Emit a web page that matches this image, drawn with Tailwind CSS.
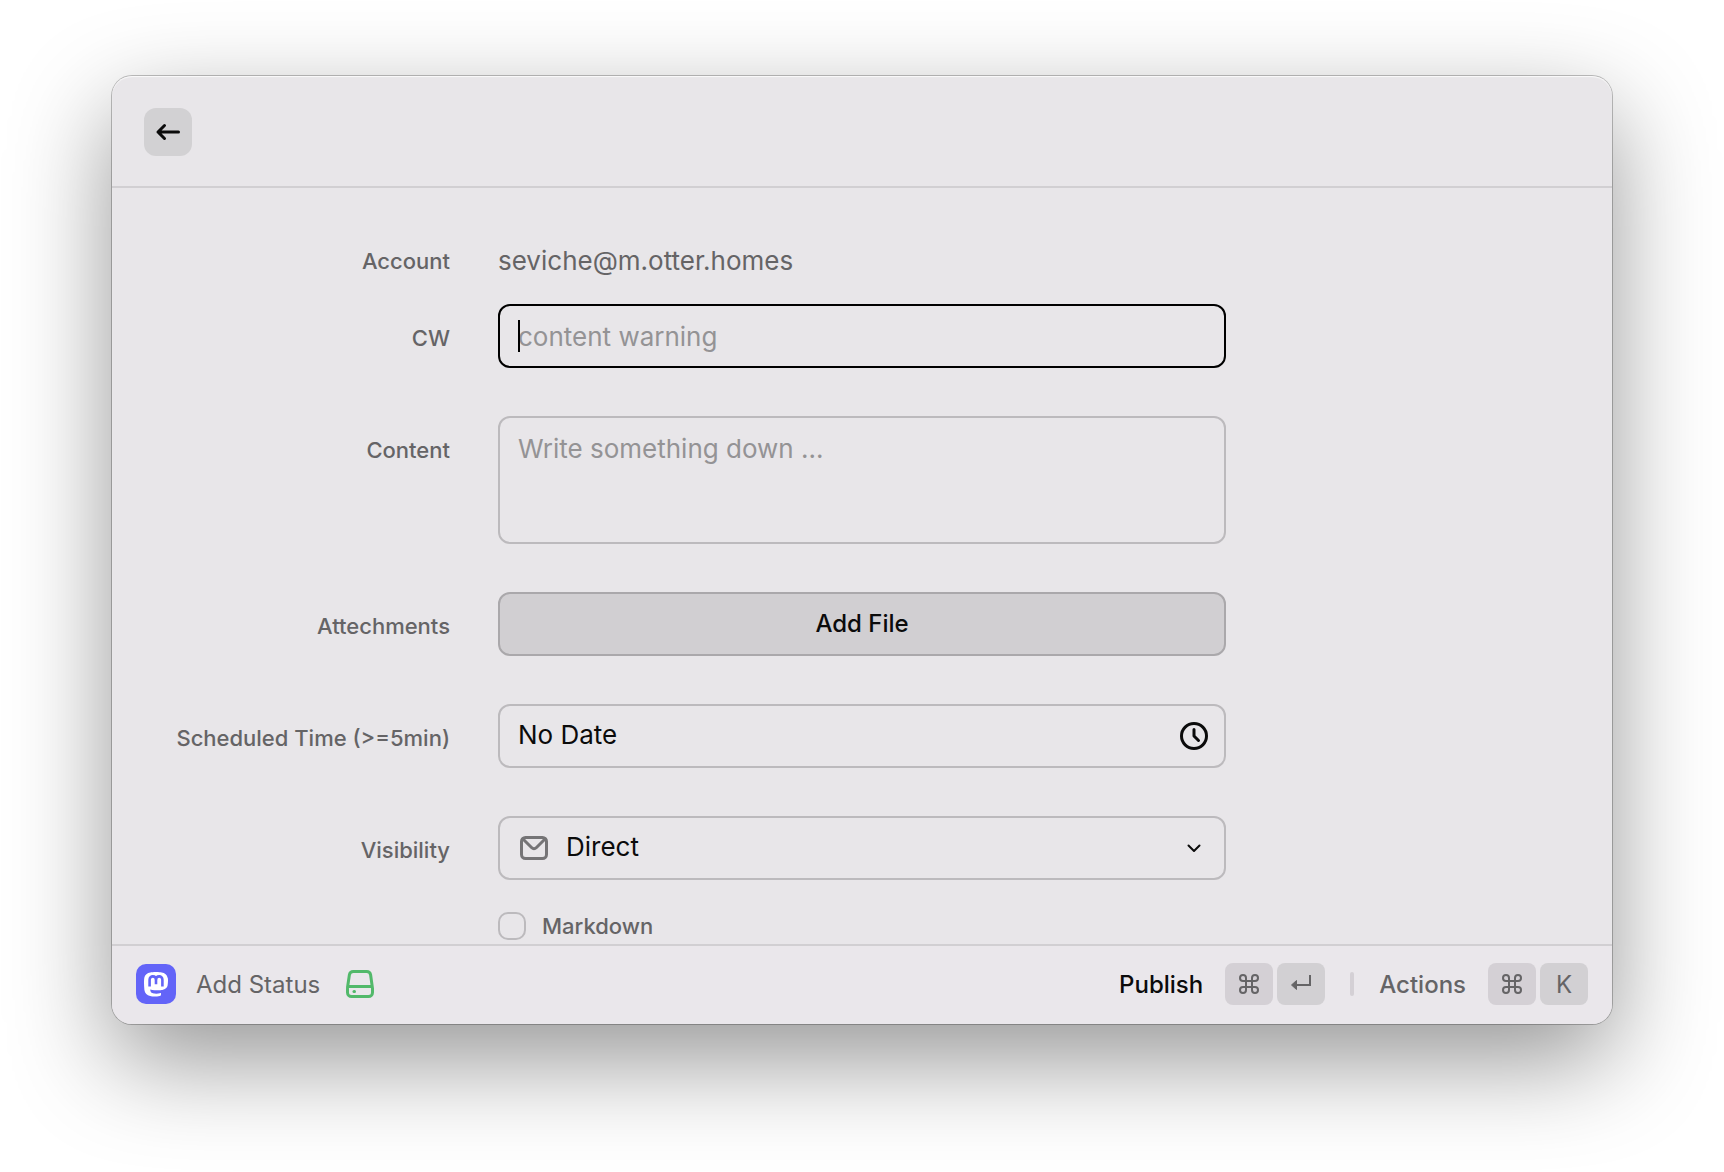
<!DOCTYPE html>
<html lang="en">
<head>
<meta charset="utf-8">
<meta name="viewport" content="width=device-width, initial-scale=1">
<title>Add Status</title>
<script src="https://cdn.jsdelivr.net/npm/@tailwindcss/browser@4"></script>
</head>
<body class="min-h-screen bg-white px-28 pt-19 pb-37 font-['Inter',sans-serif] text-[26px] leading-8 text-[#0b0b0b]">
<main class="flex flex-col overflow-hidden rounded-[20px] bg-[#e8e6e9] shadow-[inset_0_1px_1px_rgb(255_255_255/0.8),0_0_0_1px_rgb(0_0_0/0.24),0_36px_100px_rgb(0_0_0/0.42)]">
  <header class="flex h-28 items-center border-b-2 border-[#d1cfd2] px-8 pt-0.5">
    <button type="button" aria-label="Back" class="grid size-12 place-items-center rounded-xl bg-[#d2d1d3]">
      <svg class="size-8" viewBox="0 0 32 32" fill="none" stroke="currentColor" stroke-width="3" stroke-linecap="round" stroke-linejoin="round"><path d="M26.500 16H6M12.500 9.500 6 16l6.500 6.500"/></svg>
    </button>
  </header>

  <form id="status" class="flex flex-col gap-12 pt-[57px]">
    <div class="flex flex-col gap-[27px]">
      <div class="grid grid-cols-[minmax(0,1fr)_minmax(0,728px)_minmax(0,1fr)]">
        <span class="pr-12 text-right text-[22px] font-medium text-[#656466]">Account</span>
        <span class="text-[#656466]">seviche@m.otter.homes</span>
      </div>
      <div class="grid grid-cols-[minmax(0,1fr)_minmax(0,728px)_minmax(0,1fr)]">
        <label for="cw" class="pt-[18px] pr-12 text-right text-[22px] font-medium text-[#656466]">CW</label>
        <div class="relative">
          <input id="cw" type="text" placeholder="content warning" class="h-16 w-full rounded-xl border-2 border-black bg-transparent px-[18px] outline-none placeholder:text-[#949395]">
          <span class="absolute top-4 left-5 h-8 w-0.5 bg-black"></span>
        </div>
      </div>
    </div>

    <div class="grid grid-cols-[minmax(0,1fr)_minmax(0,728px)_minmax(0,1fr)]">
      <label for="content" class="pt-[18px] pr-12 text-right text-[22px] font-medium text-[#656466]">Content</label>
      <textarea id="content" placeholder="Write something down ..." class="h-32 w-full resize-none rounded-xl border-2 border-[#bcbabd] bg-transparent px-[18px] py-[15px] outline-none placeholder:text-[#949395]"></textarea>
    </div>

    <div class="grid grid-cols-[minmax(0,1fr)_minmax(0,728px)_minmax(0,1fr)]">
      <label for="file" class="pt-[18px] pr-12 text-right text-[22px] font-medium text-[#656466]">Attechments</label>
      <button id="file" type="button" class="h-16 rounded-xl border-2 border-[#aaa8ab] bg-[#d1cfd2] text-2xl font-medium">Add File</button>
    </div>

    <div class="grid grid-cols-[minmax(0,1fr)_minmax(0,728px)_minmax(0,1fr)]">
      <label for="time" class="pt-[18px] pr-12 text-right text-[22px] font-medium text-[#656466]">Scheduled Time (&gt;=5min)</label>
      <div class="relative">
        <input id="time" type="text" value="No Date" class="h-16 w-full rounded-xl border-2 border-[#bcbabd] bg-transparent pr-14 pb-1 pl-[18px] outline-none">
        <svg class="pointer-events-none absolute top-4 right-4 size-8" viewBox="0 0 32 32" fill="none" stroke="currentColor" stroke-width="3" stroke-linecap="round" stroke-linejoin="round"><circle cx="16" cy="16" r="12.500"/><path d="M16 9.500V16l4.500 4.500"/></svg>
      </div>
    </div>

    <div class="flex flex-col gap-7">
      <div class="grid grid-cols-[minmax(0,1fr)_minmax(0,728px)_minmax(0,1fr)]">
        <label for="visibility" class="pt-[18px] pr-12 text-right text-[22px] font-medium text-[#656466]">Visibility</label>
        <div class="relative">
          <select id="visibility" class="h-16 w-full appearance-none rounded-xl border-2 border-[#bcbabd] bg-transparent pr-14 pb-0.5 pl-[66px] outline-none"><option>Direct</option></select>
          <svg class="pointer-events-none absolute top-4 left-5 size-8 text-[#757476]" viewBox="0 0 32 32" fill="none" stroke="currentColor" stroke-width="3" stroke-linecap="round" stroke-linejoin="round"><rect x="3.500" y="5.500" width="25" height="21" rx="4"/><path d="m5 7 8.500 8.500q2.500 2.500 5 0L27 7"/></svg>
          <svg class="pointer-events-none absolute top-4 right-4 size-8" viewBox="0 0 32 32" fill="none" stroke="currentColor" stroke-width="2" stroke-linecap="round" stroke-linejoin="round"><path d="m10.500 13.500 5.500 5.500 5.500-5.500"/></svg>
        </div>
      </div>
      <div class="grid grid-cols-[minmax(0,1fr)_minmax(0,728px)_minmax(0,1fr)]">
        <div class="col-start-2 flex h-9 items-center gap-4">
          <input id="markdown" type="checkbox" class="size-7 appearance-none rounded-[10px] border-2 border-[#bcbabd]">
          <label for="markdown" class="text-[22px] font-medium text-[#656466]">Markdown</label>
        </div>
      </div>
    </div>
  </form>

  <footer class="flex h-20 items-center bg-[#eae7eb] px-6 text-2xl text-[#656466] shadow-[inset_0_2px_0_#d1cfd2]">
    <svg class="size-10" viewBox="0 0 40 40"><rect width="40" height="40" rx="10" fill="#6364f8"/><path fill="#fff" d="M31.600 13.800c-.4-2.900-2.900-4.900-5.900-5.300-1.300-.2-3-.4-5.700-.4s-4.500.2-5.700.4c-3 .4-5.500 2.500-6 5.300-.3 1.500-.3 3.300-.3 5 .1 2.400.1 4.800.4 7.100.4 3 2.700 5.500 5.700 6.100 2.900.8 6.300.7 9.600-.1.900-.3 1.300-.6 1.300-.6v-2.200s-2.400.7-5 .6c-2.700-.1-5.400-.3-5.700-3.400v-.9c5.200 1.200 10.200.8 12 .6 3-.4 5-2.400 5.300-4.400.6-3.100.5-7.800 0-7.800z"/><path fill="none" stroke="#6364f8" stroke-width="2.600" d="M13.600 22.600v-6.800c0-4.600 6.400-4.600 6.400.2v4.200V16c0-4.800 6.400-4.800 6.400-.2v6.800"/></svg>
    <span class="ml-5 pt-0.5">Add Status</span>
    <svg class="ml-6 size-8 text-[#52b96a]" viewBox="0 0 32 32" fill="none" stroke="currentColor" stroke-width="3" stroke-linecap="round" stroke-linejoin="round"><path d="M3.500 20.500v4a4 4 0 0 0 4 4h17a4 4 0 0 0 4-4v-4L26.600 6.800a4 4 0 0 0-4-3.300H9.400a4 4 0 0 0-4 3.300L3.500 19.500M4 18.500h24"/><path d="M10 23.500h.5"/></svg>

    <button type="submit" form="status" class="ml-auto flex items-center gap-1">
      <span class="mr-[18px] pt-0.5 font-medium text-[#0b0b0b]">Publish</span>
      <kbd class="grid h-[42px] w-12 place-items-center rounded-lg bg-[#d4d0d5]"><svg class="size-6" viewBox="0 0 24 24" fill="none" stroke="currentColor" stroke-width="2"><path d="M9 9V6a3 3 0 1 0-3 3h12a3 3 0 1 0-3-3v12a3 3 0 1 0 3-3H6a3 3 0 1 0 3 3z"/></svg></kbd>
      <kbd class="grid h-[42px] w-12 place-items-center rounded-lg bg-[#d2d0d3]"><svg class="size-6" viewBox="0 0 24 24" fill="none" stroke="currentColor" stroke-width="2"><path d="M21 3v10H6"/><path fill="currentColor" stroke-linejoin="round" stroke-width="1" d="M7.500 8.500v9L2.500 13z"/></svg></kbd>
    </button>
    <span class="mx-[25px] h-6 w-1 rounded-full bg-[#d4d0d5]"></span>
    <button type="button" class="flex items-center gap-1">
      <span class="mr-[18px] pt-0.5 font-medium">Actions</span>
      <kbd class="grid h-[42px] w-12 place-items-center rounded-lg bg-[#d4d0d5]"><svg class="size-6" viewBox="0 0 24 24" fill="none" stroke="currentColor" stroke-width="2"><path d="M9 9V6a3 3 0 1 0-3 3h12a3 3 0 1 0-3-3v12a3 3 0 1 0 3-3H6a3 3 0 1 0 3 3z"/></svg></kbd>
      <kbd class="grid h-[42px] w-12 place-items-center rounded-lg bg-[#d2d0d3] pt-0.5 font-['Inter',sans-serif] text-2xl">K</kbd>
    </button>
  </footer>
</main>
</body>
</html>
